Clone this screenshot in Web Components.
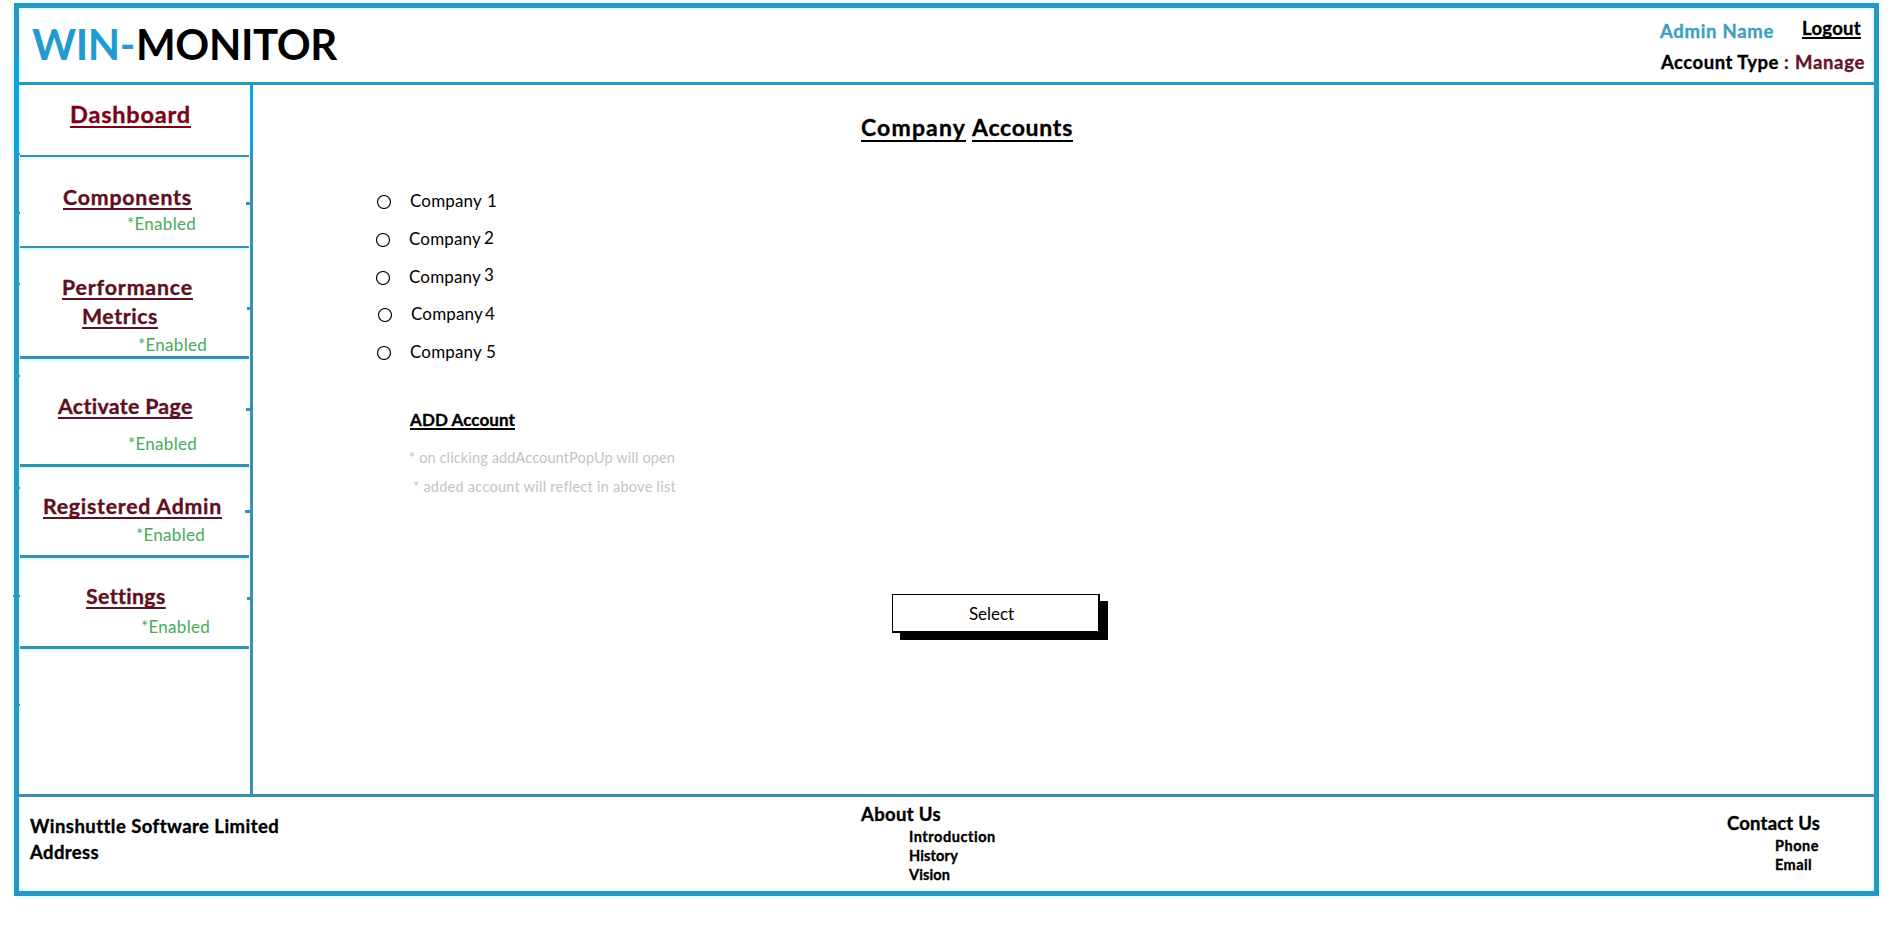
<!DOCTYPE html>
<html lang="en">
<head>
<meta charset="utf-8">
<title>Win-Monitor</title>
<style>
  html, body { margin: 0; background: #fff; }
  body { font-family: Lato, "Open Sans", sans-serif; color: #000; overflow: hidden; }
</style>
</head>
<body>
<win-app></win-app>

<template id="t-app">
  <style>
    :host { display: block; box-sizing: border-box; width: 1904px; height: 936px; padding: 3px 25px 40px 14px; overflow: hidden; }
    .frame { position: relative; box-sizing: border-box; height: 893px; border: 5px solid #2997c0; display: grid;
      grid-template-rows: 77px 709px 1fr; grid-template-columns: 234px 1fr; box-shadow: 0 0 4px #b4f7fa, inset 0 0 4px #b4f7fa; }
    .frame::before { content: ""; position: absolute; left: -5px; top: 52px; width: 5px; height: 93px; background: #0aa2e2; }
    win-header, win-footer { grid-column: 1 / -1; }
  </style>
  <div class="frame">
    <win-header></win-header>
    <win-sidebar></win-sidebar>
    <win-main></win-main>
    <win-footer></win-footer>
  </div>
</template>

<template id="t-header">
  <style>
    :host { display: flex; justify-content: space-between; box-sizing: border-box; border-bottom: 3px solid #2997c0; padding: 0 7px 0 13px; }
    .logo { display: flex; gap: 1px; }
    .user { width: 207px; }
    .row { display: flex; }
    .row + .row { margin-top: 11px; }
    .win { color: #1f9bd0; } .name { color: #3b9fc4; } .type { color: #64142a; }
  </style>
  <div class="logo">
    <ui-text class="win" size="42" lh="50" w="103" gap="11" bold>WIN-</ui-text>
    <ui-text size="42" lh="50" w="201" gap="11" bold>MONITOR</ui-text>
  </div>
  <div class="user">
    <div class="row">
      <ui-text class="name" size="18.5" w="114" gap="13" bold>Admin Name</ui-text>
      <ui-text size="18.5" w="59" gap="10" indent="28" bold under="2">Logout</ui-text>
    </div>
    <div class="row">
      <ui-text size="18.5" w="118" indent="1" bold>Account Type</ui-text>
      <ui-text class="type" size="18.5" w="5" indent="5" bold>:</ui-text>
      <ui-text class="type" size="18.5" w="70" indent="6" bold>Manage</ui-text>
    </div>
  </div>
</template>

<template id="t-sidebar">
  <style>
    :host { display: block; position: relative; box-sizing: border-box; border-right: 3px solid #3a8fae;
      border-image: linear-gradient(#0aa2e2 0 70px, #3a8fae 70px) 1; border-width: 0 3px 0 0; }
    ui-text { color: #5e0f20; }
    .dash { color: #7d0015; }
    .en { color: #47ab5e; }
    i { position: absolute; height: 3px; background: #2997c0; }
    i.l { left: 0; width: 1px; height: 2px; } i.r { right: 0; width: 4px; }
  </style>
  <nav-item h="72" line="2"><ui-text class="dash" size="23.5" w="121" gap="19" indent="50" bold under="3">Dashboard</ui-text></nav-item>
  <nav-item h="91" line="2">
    <ui-text size="21.3" w="129" gap="30" indent="43" bold under="3">Components</ui-text>
    <ui-text class="en" size="17" w="69" gap="6" indent="107">*Enabled</ui-text>
  </nav-item>
  <nav-item h="111" line="3">
    <ui-text size="21.3" w="131" gap="29" indent="42" bold under="3">Performance</ui-text>
    <ui-text size="21.3" w="76" gap="9" indent="62" bold under="3">Metrics</ui-text>
    <ui-text class="en" size="17" w="69" gap="8" indent="118">*Enabled</ui-text>
  </nav-item>
  <nav-item h="108" line="3">
    <ui-text size="21.3" w="135" gap="37" indent="38" bold under="3">Activate Page</ui-text>
    <ui-text class="en" size="17" w="69" gap="17" indent="108">*Enabled</ui-text>
  </nav-item>
  <nav-item h="91" line="3">
    <ui-text size="21.3" w="179" gap="29" indent="23" bold under="3">Registered Admin</ui-text>
    <ui-text class="en" size="17" w="69" gap="8" indent="116">*Enabled</ui-text>
  </nav-item>
  <nav-item h="91" line="3">
    <ui-text size="21.3" w="79" gap="28" indent="66" bold under="3">Settings</ui-text>
    <ui-text class="en" size="17" w="69" gap="10" indent="121">*Enabled</ui-text>
  </nav-item>
  <i class="l" style="top:68px"></i><i class="l" style="top:127px"></i><i class="l" style="top:198px"></i>
  <i class="l" style="top:290px"></i><i class="l" style="top:402px"></i>
  <i class="l" style="top:510px;left:-6px;width:7px"></i><i class="l" style="top:619px"></i>
  <i class="r" style="top:117px"></i><i class="r" style="top:222px;width:3px"></i><i class="r" style="top:323px"></i>
  <i class="r" style="top:425px;width:5px"></i><i class="r" style="top:512px;width:3px"></i>
</template>

<template id="t-main">
  <style>
    :host { display: block; }
    .title { display: flex; gap: 6px; padding-left: 608px; }
    .list { margin-top: 53px; display: grid; gap: 18px; }
    .list :nth-child(4) { margin-top: -1px; }
    .note { color: #c3c3c3; }
  </style>
  <div class="title">
    <ui-text size="23" w="105" gap="32" bold under="4">Company</ui-text>
    <ui-text size="23" w="101" gap="32" bold under="4">Accounts</ui-text>
  </div>
  <div class="list">
    <company-row n="1" x="124" space="5"></company-row>
    <company-row n="2" x="123" space="3" lift="1"></company-row>
    <company-row n="3" x="123" space="3" lift="2"></company-row>
    <company-row n="4" x="125" space="2"></company-row>
    <company-row n="5" x="124" space="4"></company-row>
  </div>
  <ui-text size="17" w="105" gap="48" indent="157" bold under="2">ADD Account</ui-text>
  <ui-text class="note" size="14.5" w="266" gap="19" indent="156">* on clicking addAccountPopUp will open</ui-text>
  <ui-text class="note" size="14.5" w="263" gap="9" indent="160">* added account will reflect in above list</ui-text>
  <shadow-button>Select</shadow-button>
</template>

<template id="t-footer">
  <style>
    :host { display: grid; grid-template-columns: 831px 866px 1fr; border-top: 3px solid #3a8fae; padding-left: 11px; }
  </style>
  <div>
    <ui-text size="18.5" w="248" gap="19" bold>Winshuttle Software Limited</ui-text>
    <ui-text size="18.5" w="69" gap="6" bold>Address</ui-text>
  </div>
  <div>
    <ui-text size="18.5" w="80" gap="7" bold>About Us</ui-text>
    <ui-text size="14.5" lh="19" w="87" gap="3" indent="48" bold>Introduction</ui-text>
    <ui-text size="14.5" lh="19" w="49" indent="48" bold>History</ui-text>
    <ui-text size="14.5" lh="19" w="41" indent="48" bold>Vision</ui-text>
  </div>
  <div>
    <ui-text size="18.5" w="93" gap="16" bold>Contact Us</ui-text>
    <ui-text size="14.5" lh="19" w="44" gap="3" indent="48" bold>Phone</ui-text>
    <ui-text size="14.5" lh="19" w="37" indent="48" bold>Email</ui-text>
  </div>
</template>

<script>
const fromTemplate = (tag, id) => customElements.define(tag, class extends HTMLElement {
  connectedCallback() {
    if (this.shadowRoot) return;
    this.attachShadow({ mode: 'open' }).append(document.getElementById(id).content.cloneNode(true));
  }
});

/* One line of text, tracked so that it fills the width given in "w". */
customElements.define('ui-text', class extends HTMLElement {
  connectedCallback() {
    if (this.shadowRoot) return;
    const a = (n, d = 0) => parseFloat(this.getAttribute(n) ?? d);
    const bold = this.hasAttribute('bold');
    const size = a('size'), box = a('lh', 20);
    /* Sizes whose rounded metrics would lift the baseline get a taller line in the same box. */
    const line = box + ({ 17: 2, 23: 1 }[size] || 0);
    const under = this.hasAttribute('under')
      ? `text-decoration: underline 2px; text-underline-offset: ${a('under')}px; text-decoration-skip-ink: none;` : '';
    const stroke = bold && size < 40 ? '-webkit-text-stroke: 0.35px currentColor;' : '';
    this.attachShadow({ mode: 'open' }).innerHTML = `<style>
      :host { display: block; flex: none; height: ${box}px; line-height: ${line}px; width: max-content;
        font-size: ${size}px; font-weight: ${bold ? 700 : 400}; ${stroke}
        margin: ${a('gap')}px 0 0 ${a('indent')}px; white-space: pre; }
      span { display: inline-block; ${under} }
    </style><span><slot></slot></span>`;
    const span = this.shadowRoot.querySelector('span');
    const natural = span.getBoundingClientRect().width;
    span.style.letterSpacing = (a('w') - natural) / this.textContent.length + 'px';
  }
});

customElements.define('nav-item', class extends HTMLElement {
  connectedCallback() {
    if (this.shadowRoot) return;
    this.attachShadow({ mode: 'open' }).innerHTML = `<style>
      :host { display: flow-root; box-sizing: border-box; height: ${this.getAttribute('h')}px; width: 229px; margin-left: 1px;
        border-bottom: ${this.getAttribute('line')}px solid #3a8fae; box-shadow: 0 2px 3px -1px #b4f7fa; }
    </style><slot></slot>`;
  }
});

customElements.define('company-row', class extends HTMLElement {
  connectedCallback() {
    if (this.shadowRoot) return;
    const a = n => this.getAttribute(n) || 0;
    this.attachShadow({ mode: 'open' }).innerHTML = `<style>
      :host { display: flex; height: 20px; padding-left: ${a('x')}px; }
      svg { flex: none; width: 14px; height: 14px; margin: 5px 19px 0 0; }
      .d { margin-top: -${a('lift')}px; margin-left: ${a('space')}px; }
    </style>
    <svg viewBox="0 0 14 14"><circle cx="7" cy="7" r="6.5" fill="#fff" stroke="#000" stroke-width="1.15"/></svg>
    <ui-text size="17" w="72">Company</ui-text>
    <div class="d"><ui-text size="17" w="9.5">${a('n')}</ui-text></div>`;
  }
});

customElements.define('shadow-button', class extends HTMLElement {
  connectedCallback() {
    if (this.shadowRoot) return;
    this.attachShadow({ mode: 'open' }).innerHTML = `<style>
      :host { display: block; margin: 97px 0 0 639px; }
      button { display: block; box-sizing: border-box; width: 208px; height: 39px; padding: 0 0 0 76px; margin: 0;
        background: #fff; border: solid #000; border-width: 1px 2px 2px 1px; border-radius: 0;
        box-shadow: 8px 7px 0 #000; font: inherit; color: #000; text-align: left; }
    </style><button><ui-text size="17" w="45">${this.textContent}</ui-text></button>`;
  }
});

fromTemplate('win-header', 't-header');
fromTemplate('win-sidebar', 't-sidebar');
fromTemplate('win-main', 't-main');
fromTemplate('win-footer', 't-footer');
fromTemplate('win-app', 't-app');
</script>
</body>
</html>
